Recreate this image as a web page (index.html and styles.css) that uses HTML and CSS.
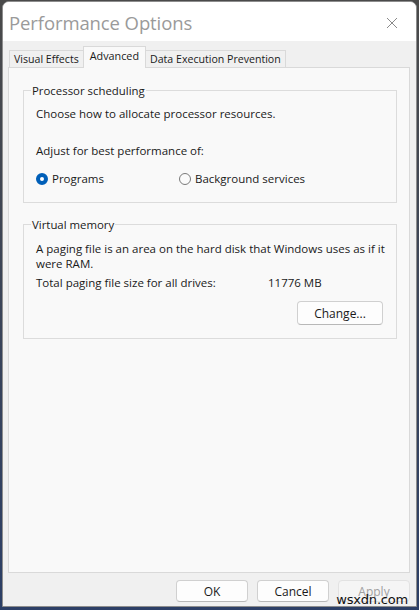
FILE: index.html
```html
<!DOCTYPE html>
<html>
<head>
<meta charset="utf-8">
<link rel="stylesheet" href="styles.css">
</head>
<body>
<div class="desktop">
  <div class="window">
    <div class="titlebar">
      <span class="title">Performance Options</span>
      <svg class="close" width="12" height="12" viewBox="0 0 12 12"><path d="M1 1 L11 11 M11 1 L1 11" stroke="#8a8a8a" stroke-width="1" fill="none"/></svg>
    </div>
    <div class="body">
      <div class="tabs">
        <div class="tab">Visual Effects</div>
        <div class="tab active">Advanced</div>
        <div class="tab">Data Execution Prevention</div>
      </div>
      <div class="panel">
        <fieldset class="group g1">
          <legend>Processor scheduling</legend>
          <p class="line first">Choose how to allocate processor resources.</p>
          <p class="line adjust">Adjust for best performance of:</p>
          <div class="radios">
            <label class="radio"><span class="dot on"></span>Programs</label>
            <label class="radio r2"><span class="dot"></span>Background services</label>
          </div>
        </fieldset>
        <fieldset class="group g2">
          <legend>Virtual memory</legend>
          <p class="para">A paging file is an area on the hard disk that Windows uses as if it were RAM.</p>
          <div class="total"><span class="tlabel">Total paging file size for all drives:</span><span>11776 MB</span></div>
          <div class="change-row"><button class="btn change">Change...</button></div>
        </fieldset>
      </div>
      <div class="footer">
        <button class="btn">OK</button>
        <button class="btn">Cancel</button>
        <button class="btn disabled">Apply</button>
      </div>
      <span class="watermark">wsxdn.com</span>
    </div>
  </div>
</div>
</body>
</html>
```
FILE: styles.css
```css
html, body { margin: 0; padding: 0; }
body {
  width: 419px; height: 610px; overflow: hidden;
  font-family: "Open Sans", "Noto Sans", sans-serif;
  font-size: 11.5px; color: #1a1a1a;
  background: #2b3a55;
}
.desktop { width: 419px; height: 610px; padding: 1px 2px 3px 2px; box-sizing: border-box; background: linear-gradient(#4a4a4a, #2c3f66); }
.window {
  width: 415px; height: 606px; background: #f0f0f0;
  border: 1px solid #8d8d8d; border-radius: 7px 7px 0 0; box-sizing: border-box;
  display: flex; flex-direction: column; position: relative; overflow: hidden;
}
.titlebar { height: 39px; background: #ffffff; display: flex; align-items: center; justify-content: space-between; padding: 0 18px 0 6px; flex-shrink: 0; }
.title { font-size: 18.5px; color: #9a9a9a; letter-spacing: -0.1px; padding-top: 1px; }
.close { display: block; margin-top: 2px; }
.body { flex: 1; display: flex; flex-direction: column; padding: 5px 6px 0 5px; position: relative; }
.tabs { display: flex; align-items: flex-end; height: 21px; padding-left: 1px; position: relative; z-index: 1; }
.tab { height: 17px; line-height: 16px; padding: 0 4px; border: 1px solid #d9d9d9; border-bottom: none; box-sizing: border-box; background: #f0f0f0; margin-right: -1px; white-space: nowrap; font-size: 10.6px; }
.tab.active { line-height: 18px; background: #f9f9f9; border-color: #d9d9d9; margin-bottom: -1px; height: 22px; padding: 0 6px; font-size: 10.8px; }
.panel { height: 506px; background: #f9f9f9; border: 1px solid #d9d9d9; box-sizing: border-box; padding: 15px 12px 0 14px; display: flex; flex-direction: column; gap: 14px; }
.group { margin: 0; border: 1px solid #dcdcdc; padding: 0 0 0 12px; min-width: 0; }
.group legend { padding: 0 1px; margin-left: -5px; font-size: 11.4px; }
.line { margin: 0; }
.g1 { height: 120px; box-sizing: border-box; }
.line.first { margin-top: 8px; }
.adjust { margin-top: 22px; }
.radios { display: flex; margin-top: 13px; }
.radio { display: flex; align-items: center; gap: 4px; width: 143px; }
.dot { width: 12px; height: 12px; border-radius: 50%; border: 1px solid #7a7a7a; box-sizing: border-box; background: #fbfbfb; display: inline-block; }
.dot.on { border: 4px solid #005fb8; background: #ffffff; }
.g2 { height: 122px; box-sizing: border-box; }
.para { margin: 9px 0 0 0; line-height: 15px; padding-right: 0; }
.total { display: flex; margin-top: 4px; }
.tlabel { width: 232px; }
.change-row { display: flex; justify-content: flex-end; padding-right: 13px; margin-top: 11px; }
.btn {
  font-family: inherit; font-size: 12px; color: #1a1a1a;
  width: 72px; height: 22px; background: #fdfdfd; border: 1px solid #d0d0d0; border-bottom-color: #b8b8b8; border-radius: 4px; padding: 0;
}
.btn.change { width: 86px; height: 24px; }
.footer { display: flex; justify-content: flex-end; gap: 9px; padding: 7px 0 0 0; margin-right: 0; }
.btn.disabled { background: #f5f5f5; color: #a0a0a0; border-color: #e2e2e2; }
.watermark { position: absolute; right: 8px; bottom: -1px; font-family: "DejaVu Sans", sans-serif; font-size: 13px; color: #111; letter-spacing: -0.2px; }
```
